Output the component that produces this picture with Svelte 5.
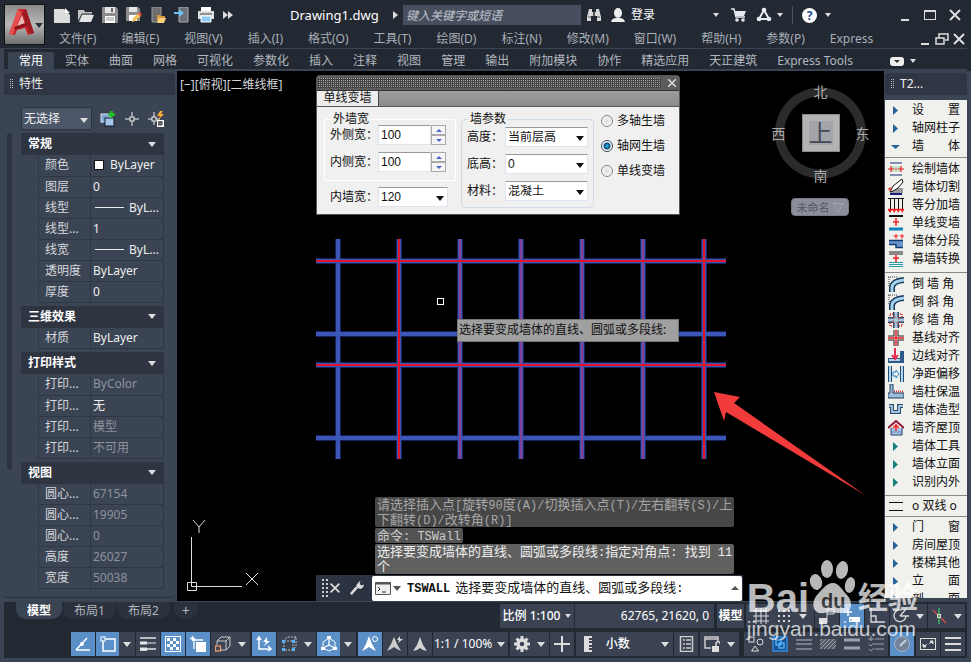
<script>
  const W = '#e4e6ea';
  const icons = {
    newFile: `<path d="M0 2h10l6 6v8H0z" fill="#dcdcdc"/><path d="M11 1l5 5h-5z" fill="#fff"/>`,
    open: `<path d="M0 15V3h6l1 2h7v3H5z" fill="#c4c4c4"/><path d="M4 8h12l-3 7H1z" fill="#e6e6e6"/><path d="M0 15L4 7h11" fill="none" stroke="#232a36"/>`,
    save: `<path d="M0 0h14l2 2v14H0z" fill="#8d8d8d"/><path d="M3 0h10v6H3z" fill="#e6e6e6"/><path d="M9 1h2v4H9z" fill="#666"/><path d="M3 9h10v7H3z" fill="#fff"/><path d="M4 11h8M4 13h8" stroke="#999"/>`,
    saveAs: `<path d="M0 0h12l2 2v12H0z" fill="#8d8d8d"/><path d="M3 0h8v5H3z" fill="#e6e6e6"/><path d="M3 8h8v6H3z" fill="#fff"/><path d="M6 15l1-4 6-5 2 3-6 5z" fill="#f4c25b"/><path d="M12 7l2-2 2 2-2 2z" fill="#e2483c"/>`,
    openWeb: `<path d="M2 0h9v15H2z" fill="#6d6d6d" stroke="#999"/><path d="M7 15V8h3l1 1h4v2z" fill="#d99b3e"/><path d="M9 11h7l-2 5H7z" fill="#f8cf7c"/>`,
    saveWeb: `<path d="M5 0h9v15H5z" fill="#6a6f78" stroke="#aaa"/><path d="M0 5h5V2l5 4-5 4V7H0z" fill="#6fc0f5"/>`,
    print: `<path d="M3 0h10v4H3z" fill="#fff"/><path d="M0 4h16v8H0z" fill="#ddd"/><path d="M2 7h12" stroke="#444"/><path d="M3 9h10v6H3z" fill="#8ecbf7" stroke="#fff"/>`,
    more: `<path d="M1 4l5 4-5 4zM6 4l5 4-5 4z" fill="#ddd"/>`,
    find: `<path d="M3 2h3v3h4V2h3l2 8v4h-4V9H5v5H1v-4z" fill="#d9d9d9"/><path d="M2 10h3M11 10h3" stroke="#555"/><path d="M7 5h2v4H7z" fill="#555"/>`,
    user: `<ellipse cx="8" cy="6" rx="4" ry="5" fill="#eee"/><path d="M1 15c1-4 4-4 7-4s6 0 7 4z" fill="#eee"/>`,
    cart: `<path d="M0 2h3l2 8h9" fill="none" stroke="#e6e9f0" stroke-width="1.500"/><path d="M4 4h11l-2 5H5z" fill="#e6e9f0"/><circle cx="6" cy="13" r="1.800" fill="#e6e9f0"/><circle cx="12" cy="13" r="1.800" fill="#e6e9f0"/>`,
    tri: `<path d="M8 3l5 9H3z" fill="none" stroke="#e6e9f0" stroke-width="2"/><circle cx="8" cy="3" r="2.300" fill="#e6e9f0"/><circle cx="3" cy="12" r="2.300" fill="#e6e9f0"/><circle cx="13" cy="12" r="2.300" fill="#e6e9f0"/>`,
    min: `<path d="M4 13h8" stroke="#ddd" stroke-width="2"/>`,
    max: `<rect x="2.500" y="3.500" width="11" height="9" fill="none" stroke="#ddd"/><path d="M2 4h12" stroke="#ddd" stroke-width="2"/>`,
    close: `<path d="M3 3l10 10M13 3L3 13" stroke="#ddd" stroke-width="2"/>`,
    restore: `<path d="M5 7V3h9v6h-3" fill="none" stroke="#ddd" stroke-width="1.500"/><path d="M2 7h8v6H2z" fill="none" stroke="#ddd" stroke-width="1.500"/>`,
    ribbon: `<rect x="1" y="4" width="14" height="9" rx="3" fill="#eee"/><path d="M5 7h6l-3 3z" fill="#333"/>`,
    pickAdd: `<rect x="1" y="3" width="9" height="8" fill="#7fa5d8" stroke="#dce8f8"/><rect x="5" y="7" width="9" height="8" fill="#a8c6ec" stroke="#0c1a30"/><path d="M11.500 0v7M8 3.500h7" stroke="#1ec322" stroke-width="2.500"/>`,
    pick: `<path d="M8 1v14M1 8h14" stroke="#eee"/><rect x="6" y="6" width="4" height="4" fill="#3b4453" stroke="#eee"/>`,
    quick: `<path d="M6 1v13M0 8h12" stroke="#eee"/><rect x="4" y="6" width="4" height="4" fill="#3b4453" stroke="#eee"/><path d="M12 0l-3 5h3l-2 4 6-6h-3l2-3z" fill="#f7a834"/><path d="M9 9h7v7H9z" fill="#fff"/><path d="M10 11h5M10 13h5M11 10v5M13 10v5" stroke="#333"/>`,
    snapA: `<path d="M1 14L12 2M1 14h14" stroke="#fff" stroke-width="1.500"/><circle cx="7" cy="8" r="2" fill="#fff"/>`,
    osnap: `<path d="M5 3h10v12H3V5" fill="none" stroke="#fff" stroke-width="1.500"/><rect x="1" y="1" width="4" height="4" fill="#5a8fc8" stroke="#fff"/>`,
    weights: `<path d="M0 2h16M0 14h7M7 13h9" stroke="${W}" stroke-width="1.500"/><path d="M0 7h7M0 13h7" stroke="${W}" stroke-width="3"/><path d="M7 7h9" stroke="${W}"/>`,
    checker: `<rect x=".5" y=".5" width="15" height="15" fill="none" stroke="#fff"/><path d="M2 2h3v3H2zM8 2h3v3H8zM5 5h3v3H5zM11 5h3v3h-3zM2 8h3v3H2zM8 8h3v3H8zM5 11h3v3H5zM11 11h3v3h-3z" fill="#fff"/>`,
    cycle: `<path d="M6 6h10v10H6z" fill="#fff"/><path d="M4 13V4h9M2.500 0v5M0 2.500h5" fill="none" stroke="#fff" stroke-width="1.300"/>`,
    cube: `<path d="M2 9V5l4-4h9v9l-4 4H6M2 5h9v9M11 5l4-4" fill="none" stroke="#ccc"/><rect x=".5" y="10" width="5" height="5" fill="#3b4453" stroke="#f09a6a" stroke-width="1.300"/>`,
    ducs: `<path d="M3 1v12h12M1 4l2-3 2 3M12 10l3 3-3 2" fill="none" stroke="#fff" stroke-width="1.500"/><path d="M11 1L7 6h3l-2 4 6-5h-3z" fill="#fff"/>`,
    filter: `<path d="M3 5l3-4h9v9l-3 4M3 5h9l3-4M12 5v9H3V5" fill="none" stroke="#bbb" stroke-dasharray="2 1"/><path d="M1 4h3v3H1zM11 4h3v3h-3zM1 12h3v3H1zM11 12h3v3h-3z" fill="#54b4f5"/>`,
    gizmo: `<path d="M8 2l6 4v6l-6 3-6-3V6z" fill="none" stroke="#fff"/><path d="M8 2v7l-6 3M8 9l6 3" fill="none" stroke="#fff" stroke-width="1.300"/><path d="M6 0h4v3H6zM0 11h4v3H0zM12 11h4v3h-4z" fill="#fff"/>`,
    annoA: `<path d="M7 0l3 8 4 7-4-2-3-2-3 2-4 2 4-7z" fill="#fff"/><circle cx="13" cy="3" r="2.500" fill="none" stroke="#fff"/>`,
    annoB: `<path d="M7 1l3 7 4 7-4-2-3-2-3 2-4 2 4-7z" fill="#ccc"/><path d="M13 0l-3 4h2l-1 3 5-4h-3z" fill="#ddd"/>`,
    annoC: `<path d="M8 1l3 8 4 6-4-1-3-2-3 2-4 1 4-6z" fill="#d4d4d4"/>`,
    gear: `<circle cx="8" cy="8" r="4" fill="none" stroke="#ddd" stroke-width="3.500"/><path d="M8 0v3M8 13v3M0 8h3M13 8h3M2.500 2.500l2 2M11.500 11.500l2 2M2.500 13.500l2-2M11.500 4.500l2-2" stroke="#ddd" stroke-width="3"/>`,
    plus: `<path d="M8 0v16M0 8h16" stroke="#ddd" stroke-width="2"/>`,
    ruler: `<path d="M4 0h8v2H9v2h3v1H9v2h3v2H9v2h3v1H9v2h3v2H4z" fill="#ddd"/>`,
    props: `<rect x="2.500" y=".5" width="12" height="15" fill="none" stroke="#ccc" stroke-width="1.500"/><path d="M5 4h2M8 4h5M5 8h2M8 8h5M5 12h2M8 12h5" stroke="#ccc" stroke-width="1.500"/>`,
    lock: `<path d="M7 12H1V1h13v5M1 3h13" fill="none" stroke="#ccc" stroke-width="1.500"/><path d="M8 10h7v6H8z" fill="#ddd"/><path d="M12 10V7q2-3 4 0v1" fill="none" stroke="#ddd" stroke-width="1.500"/>`,
    shapes: `<rect x="1" y="1" width="5" height="5" fill="none" stroke="#ddd"/><circle cx="12" cy="6" r="3" fill="none" stroke="#ddd"/><path d="M7 10l3.500 5h-7z" fill="none" stroke="#ddd"/>`,
    isolate: `<rect x="1" y="1" width="14" height="14" fill="#1c4f86" stroke="#2a8be6" stroke-width="1.500"/><rect x="4" y="4" width="5" height="5" fill="none" stroke="#4db0ff" stroke-width="1.500"/><rect x="7" y="7" width="5" height="5" fill="none" stroke="#4db0ff" stroke-width="1.500"/>`,
    lines3: `<path d="M0 4h16M0 8h16M0 13h16" stroke="#8d939d" stroke-width="1.500"/>`,
    hatch: `<rect y="3" width="16" height="10" fill="#555d69"/><path d="M0 5l2-2M0 9l6-6M0 13L10 3M4 13L14 3M8 13l8-8M12 13l4-4" stroke="#9a9fa8"/>`,
    lines2: `<path d="M0 4h16M0 12h16" stroke="#9ba1ab" stroke-width="3"/>`,
    listAdd: `<path d="M3 0v5M0 3h6M7 3h9M6 8h10M7 13h9M1 8l2 2 3-3M1 13l2 2 3-3" fill="none" stroke="#9ba1ab"/>`,
    perf: `<circle cx="8" cy="8" r="7.500" fill="#71829a" stroke="#a9b5c6"/><path d="M6 10l6-6" stroke="#c8d0dc" stroke-width="2"/>`,
    full: `<rect x=".5" y="2.500" width="15" height="11" fill="none" stroke="#ddd"/><path d="M10 5h3v3zM3 8v3h3z" fill="#ddd" stroke="#ddd"/><path d="M12 5L9 8M4 11l3-3" stroke="#ddd"/>`,
    burger: `<path d="M0 2h16M0 8h16M0 14h16" stroke="#ddd" stroke-width="2"/>`,
    grid: `<path d="M3 0v16M8 0v16M13 0v16M0 3h16M0 8h16M0 13h16" stroke="#ddd"/>`,
    dots: `<path d="M2 3h2M7 3h2M12 3h2M2 8h2M7 8h2M12 8h2M2 13h2M7 13h2M12 13h2" stroke="#ddd" stroke-width="2"/>`,
    infer: `<path d="M0 10h8v6H0z" fill="#ddd"/><path d="M8 15V1h7v5H8" fill="none" stroke="#ddd"/>`,
    dyn: `<path d="M4 1v7M0 4h8" stroke="#fff" stroke-width="1.500"/><path d="M5 9h11v5H5z" fill="#fff"/><path d="M7 11v2" stroke="#5a8fc8"/>`,
    ortho: `<path d="M2 0v14h14M2 8h5v6" fill="none" stroke="#ddd" stroke-width="1.300"/>`,
    polar: `<path d="M13 8a6 6 0 1 1-4-6M7 8h9M7 8l6-7" fill="none" stroke="#ddd" stroke-width="1.300"/>`,
    iso: `<path d="M2 2l13 13" stroke="#d34b4b" stroke-width="1.500"/><path d="M8 0v16" stroke="#3fae69" stroke-width="1.500"/><rect x="6.500" y="6.500" width="3" height="3" fill="none" stroke="#ddd"/>`,
    wrench: `<path d="M1 15l7-8" stroke="#ddd" stroke-width="3"/><path d="M9 8L7 5l3-4 2-1-1 3 2 2 3-1-1 3-3 2z" fill="#ddd"/>`,
    arrowR: `<path d="M5 4l5 4.500-5 4.500z" fill="#26639b"/>`,
    arrowT: `<path d="M5 4l5 4.500-5 4.500z" fill="#158080"/>`,
    arrowD: `<path d="M3 7h9l-4.500 4z" fill="#26639b"/>`,
    wDraw: `<path d="M2 2h12M2 14h12" stroke="#1c2f78"/><path d="M2 5h12v6H2z" fill="#c7e4c8"/><path d="M0 8h6M10 8h6M7 8h2M3 5v6M13 5v6" stroke="#e22" stroke-width="1.200"/>`,
    wCut: `<path d="M5 9h10v5H2z" fill="#9a9a9a"/><path d="M2 15h12" stroke="#17207c" stroke-width="2"/><path d="M2 13l3-6 9-7 1 3-5 6-5 3z" fill="#fff" stroke="#111"/><path d="M0 10h4M2 8v4" stroke="#d22"/>`,
    wDiv: `<path d="M0 1.500h16M2.500 1v11M6.500 1v11M10.500 1v11M14.500 1v11" stroke="#111"/><path d="M0 12.500h16" stroke="#e22" stroke-width="1.500"/><path d="M0 13h4l-2 3zM5 13h3l-2 3zM9 13h3l-2 3zM13 13h3l-2 3z" fill="#e22"/>`,
    wLine: `<path d="M1 1h14" stroke="#111" stroke-width="2"/><path d="M1 14h14" stroke="#0d83b8" stroke-width="3"/><path d="M8 3v8M5 7h6" stroke="#e22" stroke-width="1.500"/>`,
    wSeg: `<path d="M1 7h14v8H8v-4H1z" fill="#6c97cc"/><path d="M1 7.500h14M1 11.500h7v3h7" fill="none" stroke="#173d73" stroke-width="1.500"/><path d="M8 1v5M5.500 3h5M14 1v5M12 3h4" stroke="#e22"/>`,
    wConv: `<path d="M1 1h14M1 3h14" stroke="#222"/><path d="M1 11.500h14M1 13.500h14M1 15.500h14" stroke="#2a9aa5"/><path d="M8 4v7M5 7h6" stroke="#e22" stroke-width="1.500"/>`,
    cornerR: `<path d="M4 16V11Q5 5 16 4" fill="none" stroke="#17385e" stroke-width="6"/><path d="M4 16V11Q5 5 16 4" fill="none" stroke="#a7d3ea" stroke-width="3"/><path d="M0 1h9M1 1v9" stroke="#333" stroke-dasharray="1 1"/>`,
    fix: `<path d="M2 2h12v12H2z" fill="none" stroke="#e0583a" stroke-width="2" stroke-dasharray="1 1"/><path d="M8 0v16M0 8h16" stroke="#314a69" stroke-width="6"/><path d="M8 0v16M0 8h16" stroke="#a9c4dd" stroke-width="3"/><path d="M5 5h6v6H5z" fill="none" stroke="#e0583a" stroke-dasharray="1 1"/>`,
    base: `<path d="M8 0v16M0 8h16" stroke="#222" stroke-width="5"/><path d="M8 0v16M0 8h16" stroke="#e8edf2" stroke-width="3"/><path d="M8 0v16M0 8h16" stroke="#e22" stroke-width="1.500"/>`,
    edge: `<path d="M0 10h12V3h4v12H0z" fill="#2c5a88"/><path d="M1 12h11" stroke="#b7d3ea" stroke-width="2"/><path d="M7 0v9M4 7l3 4 3-4" fill="none" stroke="#ee2b55" stroke-width="2"/>`,
    dist: `<path d="M2 0v16M14 0v16" stroke="#1f4b77" stroke-width="4"/><path d="M2 0v16M14 0v16" stroke="#b5d7ee" stroke-width="2"/><path d="M5 6h3V4l3 4-3 4v-2H5z" fill="none" stroke="#2b86c9"/>`,
    insul: `<path d="M2 0h3v9h11v5H0V9h2z" fill="#9bbbd6" stroke="#1f3e63"/><path d="M6 7.500h10" stroke="#c33" stroke-width="2" stroke-dasharray="1 1"/>`,
    shape: `<path d="M1 4h3v6h7V4h4" fill="none" stroke="#27517d" stroke-width="4"/><path d="M1 4h3v6h7V4h4" fill="none" stroke="#cfe0ef" stroke-width="1.500"/>`,
    roof: `<path d="M3 8v7h11V8" fill="#a9c4e6" stroke="#20406f"/><path d="M0 8l8-7 8 7" fill="none" stroke="#8e1636" stroke-width="2"/><path d="M8 4v7M5 8l3-3 3 3" fill="none" stroke="#e22" stroke-width="1.500"/><path d="M4 12h9" stroke="#6484b5"/>`,
    dbl: `<path d="M1 4.500h14M1 12.500h14" stroke="#111"/>`
  };

  const quick = ['newFile', 'open', 'save', 'saveAs', 'openWeb', 'saveWeb', 'print', 'more'];
  const menus = ['文件(F)', '编辑(E)', '视图(V)', '插入(I)', '格式(O)', '工具(T)', '绘图(D)', '标注(N)', '修改(M)', '窗口(W)', '帮助(H)', '参数(P)', 'Express'];
  const tabs = ['常用', '实体', '曲面', '网格', '可视化', '参数化', '插入', '注释', '视图', '管理', '输出', '附加模块', '协作', '精选应用', '天正建筑', 'Express Tools'];

  const groups = [
    { title: '常规', rows: [['颜色', 'ByLayer', 'box'], ['图层', '0'], ['线型', 'ByL...', 'line'], ['线型...', '1'], ['线宽', 'ByL...', 'line'], ['透明度', 'ByLayer'], ['厚度', '0']] },
    { title: '三维效果', rows: [['材质', 'ByLayer']] },
    { title: '打印样式', rows: [['打印...', 'ByColor', 'dim'], ['打印...', '无'], ['打印...', '模型', 'dim'], ['打印...', '不可用', 'dim']] },
    { title: '视图', rows: [['圆心...', '67154', 'dim'], ['圆心...', '19905', 'dim'], ['圆心...', '0', 'dim'], ['高度', '26027', 'dim'], ['宽度', '50038', 'dim']] }
  ];

  const tools = [
    [['arrowR', '设　　置'], ['arrowR', '轴网柱子'], ['arrowD', '墙　　体']],
    [['wDraw', '绘制墙体'], ['wCut', '墙体切割'], ['wDiv', '等分加墙'], ['wLine', '单线变墙'], ['wSeg', '墙体分段'], ['wConv', '幕墙转换']],
    [['cornerR', '倒 墙 角'], ['cornerR', '倒 斜 角'], ['fix', '修 墙 角'], ['base', '基线对齐'], ['edge', '边线对齐'], ['dist', '净距偏移'], ['insul', '墙柱保温'], ['shape', '墙体造型'], ['roof', '墙齐屋顶'], ['arrowT', '墙体工具'], ['arrowT', '墙体立面'], ['arrowT', '识别内外']],
    [['dbl', 'o 双线 o']],
    [['arrowR', '门　　窗'], ['arrowR', '房间屋顶'], ['arrowR', '楼梯其他'], ['arrowR', '立　　面'], ['arrowR', '剖　　面']]
  ];

  const history = [
    { tone: 'old', lines: ['请选择插入点[旋转90度(A)/切换插入点(T)/左右翻转(S)/上', '下翻转(D)/改转角(R)]'] },
    { tone: 'mid', lines: ['命令: TSWall'] },
    { tone: 'new', lines: ['选择要变成墙体的直线、圆弧或多段线:指定对角点: 找到 11', '个'] }
  ];
  const runs = (s) => s.match(/[\x20-\x7e]+|[^\x20-\x7e]+/g) ?? [];

  const status = [
    [{ i: 'snapA', on: true }, { i: 'osnap', on: true, split: true }, { i: 'weights' }, { i: 'checker', on: true }, { i: 'cycle', on: true }, { i: 'cube', caret: true }],
    [{ i: 'ducs', on: true }, { i: 'filter', caret: true }, { i: 'gizmo', on: true, split: true }],
    [{ i: 'annoA', on: true }, { i: 'annoB' }, { i: 'annoC' }, { t: '1:1 / 100%', caret: true }],
    [{ i: 'gear', caret: true }, { i: 'plus' }],
    [{ i: 'ruler', t: '小数', caret: true, wide: true }, { i: 'props' }],
    [{ i: 'lock', caret: true }],
    [{ i: 'shapes' }, { i: 'isolate' }, { i: 'lines3' }, { i: 'hatch' }, { i: 'lines2' }, { i: 'listAdd' }],
    [{ i: 'perf', on: true }],
    [{ i: 'full' }, { i: 'burger' }]
  ];

  const columns = [22, 83, 144, 205, 266, 327, 388];
  const redColumns = [83, 388];
  const softColumns = [144, 205, 266, 327];
  const beams = [25, 98, 129, 202];
  const redBeams = [25, 129];

  let outer = $state('100');
  let inner = $state('100');
  let mode = $state('轴网生墙');
</script>

{#snippet icon(name, size = 16)}
  <span class="icon">{@html `<svg width="${size}" height="${size}" viewBox="0 0 16 16">${icons[name]}</svg>`}</span>
{/snippet}

<div class="app">
  <header>
    <button class="logo" aria-label="应用程序菜单">
      <svg width="38" height="38" viewBox="0 0 38 38">
        <path d="M4 28L13 3h8l8 24-6 2-3-7-8 2-2 5z" fill="#c9252c" />
        <path d="M13 3l4 4-9 21-4 0z" fill="#e8514f" />
        <path d="M17 9l3 9-8 2z" fill="#e9b8b6" />
        <path d="M9 21l14-5 1 3-14 5z" fill="#8e151b" />
        <path d="M21 3l8 24-4 1L17 7z" fill="#9c1b22" />
        <path d="M30 17h8l-4 5z" fill="#2a3342" />
      </svg>
    </button>
    <div class="bars">
      <div class="titlebar">
        <div class="quick">
          {#each quick as q}<button aria-label={q}>{@render icon(q)}</button>{/each}
        </div>
        <span class="title">Drawing1.dwg</span>
        <span class="tri-right"></span>
        <input class="search" type="text" placeholder="键入关键字或短语" aria-label="搜索" />
        <button class="find" aria-label="查找">{@render icon('find')}</button>
        <button class="login">{@render icon('user')}登录</button>
        <div class="account">
          <span class="caret small"></span>
          <button aria-label="商店">{@render icon('cart')}</button>
          <button aria-label="应用">{@render icon('tri')}<span class="caret small"></span></button>
          <span class="rule"></span>
          <button aria-label="帮助"><span class="help">?</span><span class="caret small"></span></button>
        </div>
        <div class="window">
          <button aria-label="最小化">{@render icon('min')}</button>
          <button aria-label="最大化">{@render icon('max')}</button>
          <button aria-label="关闭">{@render icon('close')}</button>
        </div>
      </div>
      <nav class="menubar">
        {#each menus as m}<button>{m}</button>{/each}
        <div class="docwin">
          <button aria-label="最小化图形">{@render icon('min')}</button>
          <button aria-label="还原图形">{@render icon('restore')}</button>
          <button aria-label="关闭图形">{@render icon('close')}</button>
        </div>
      </nav>
    </div>
  </header>

  <nav class="ribbon">
    {#each tabs as t, n}<button class:active={n === 0}>{t}</button>{/each}
    <button class="fold" aria-label="功能区选项">{@render icon('ribbon')}<span class="caret small"></span></button>
  </nav>

  <main>
    <aside class="props">
      <div class="panel-head"><span class="grip"></span>特性</div>
      <div class="props-body">
        <div class="picker">
          <div class="combo dark">
            <select aria-label="选择对象"><option>无选择</option></select>
            <span class="caret"></span>
          </div>
          <button aria-label="切换累加选择">{@render icon('pickAdd')}</button>
          <button aria-label="选择对象">{@render icon('pick')}</button>
          <button aria-label="快速选择">{@render icon('quick')}</button>
        </div>
        <div class="scroller">
          <span class="thumb"></span>
          <div class="groups">
            {#each groups as g}
              <section>
                <button class="group-head">{g.title}<span class="caret"></span></button>
                <table>
                  <tbody>
                    {#each g.rows as [label, value, kind]}
                      <tr>
                        <th scope="row">{label}</th>
                        <td class:dim={kind === 'dim'}>
                          {#if kind === 'box'}<span class="swatch"></span>{:else if kind === 'line'}<span class="stroke"></span>{/if}{value}
                        </td>
                      </tr>
                    {/each}
                  </tbody>
                </table>
              </section>
            {/each}
          </div>
        </div>
      </div>
    </aside>

    <div class="canvas">
      <span class="view-label">[−][俯视][二维线框]</span>

      <svg class="plan" width="412" height="224" viewBox="0 0 412 224">
        <g stroke="#18225a" stroke-width="6">
          {#each columns as x}<path d="M{x} 3V223" />{/each}
          {#each beams as y}<path d="M0 {y}H410" />{/each}
        </g>
        <g stroke="#3a55b4" stroke-width="4">
          {#each columns as x}<path d="M{x} 3V223" />{/each}
          {#each beams as y}<path d="M0 {y}H410" />{/each}
        </g>
        <g stroke="#8a3f94" stroke-width="2">
          {#each softColumns as x}<path d="M{x} 3V223" />{/each}
        </g>
        <g stroke="#e0142c" stroke-width="2">
          {#each redColumns as x}<path d="M{x} 3V223" />{/each}
          {#each redBeams as y}<path d="M0 {y}H410" />{/each}
        </g>
      </svg>
      <svg class="pickbox" width="8" height="8"><rect x="1.500" y="1.500" width="6" height="6" fill="none" stroke="#fff" /></svg>
      <div class="tooltip">选择要变成墙体的直线、圆弧或多段线:</div>
      <svg class="pointer" width="152" height="104" viewBox="0 0 152 104"><path d="M0 0l26 5-6 6 131 92L12 20l-2 9z" fill="#f23b3b" /></svg>
      <svg class="ucs" width="76" height="76" viewBox="0 0 76 76">
        <path d="M6 1l6 7 6-7M12 8v6M4.500 18v45M9 67.500h46M59 54l12 12M71 54L59 66" fill="none" stroke="#ddd" />
        <path d="M.5 63.500h9v8h-9zM4.500 62v5.500H10" fill="none" stroke="#ddd" />
      </svg>

      <div class="cube">
        <span class="north">北</span>
        <span class="west">西</span>
        <span class="top">上</span>
        <span class="east">东</span>
        <span class="south">南</span>
      </div>
      <button class="ucs-name">未命名<span>▽</span></button>

      <div class="dialog" role="dialog" aria-label="单线变墙">
        <div class="dlg-title"><span class="mesh"></span><button aria-label="关闭">{@render icon('close', 12)}</button></div>
        <div class="dlg-tabs"><button>单线变墙</button></div>
        <div class="dlg-body">
          <div>
            <fieldset class="outer">
              <legend>外墙宽</legend>
              <div class="field"><label for="outer">外侧宽：</label><input id="outer" type="text" bind:value={outer} /><span class="spin"><button aria-label="增加外侧宽"></button><button aria-label="减少外侧宽"></button></span></div>
              <div class="field"><label for="inner">内侧宽：</label><input id="inner" type="text" bind:value={inner} /><span class="spin"><button aria-label="增加内侧宽"></button><button aria-label="减少内侧宽"></button></span></div>
            </fieldset>
            <div class="field single"><label for="in">内墙宽：</label><div class="combo"><select id="in"><option>120</option></select><span class="caret"></span></div></div>
          </div>
          <fieldset class="params">
            <legend>墙参数</legend>
            <div class="field"><label for="h">高度：</label><div class="combo"><select id="h"><option>当前层高</option></select><span class="caret"></span></div></div>
            <div class="field"><label for="b">底高：</label><div class="combo"><select id="b"><option>0</option></select><span class="caret"></span></div></div>
            <div class="field"><label for="m">材料：</label><div class="combo"><select id="m"><option>混凝土</option></select><span class="caret"></span></div></div>
          </fieldset>
          <div class="radios">
            {#each ['多轴生墙', '轴网生墙', '单线变墙'] as r}
              <label><input type="radio" name="mode" value={r} bind:group={mode} />{r}</label>
            {/each}
          </div>
        </div>
      </div>

      <div class="command">
        <div class="history">
          {#each history as h}
            <div class={h.tone}>
              {#each h.lines as line}
                <div class="line">{#each runs(line) as r}<span class:mono={/[\x20-\x7e]/.test(r)}>{r}</span>{/each}</div>
              {/each}
            </div>
          {/each}
        </div>
        <div class="cmdbar">
          <span class="grip big"></span>
          <button aria-label="关闭命令行">{@render icon('close', 14)}</button>
          <button aria-label="自定义">{@render icon('wrench', 14)}</button>
          <div class="prompt">
            <svg width="16" height="13" viewBox="0 0 16 13"><path d="M.5.5h15v12H.5z" fill="#eee" stroke="#555" /><path d="M0 1.500h16" stroke="#555" stroke-width="2" /><path d="M3 5l2 2-2 2M7 10h4" fill="none" stroke="#333" /></svg>
            <span class="caret"></span>
            <label for="cmd"><b class="mono">TSWALL</b><span>选择要变成墙体的直线、圆弧或多段线</span><span class="mono">:</span></label>
            <input id="cmd" type="text" />
            <span class="caret up"></span>
          </div>
        </div>
      </div>
    </div>

    <aside class="tools">
      <div class="panel-head"><span class="grip"></span>T2...</div>
      <div class="tool-list">
        {#each tools as set}
          <div class="set">
            {#each set as [i, t]}<button>{@render icon(i)}<span>{t}</span></button>{/each}
          </div>
        {/each}
      </div>
    </aside>
  </main>

  <footer>
    <div class="layouts">
      <div class="sheets">
        <button class="current">模型</button>
        <button>布局1</button>
        <button>布局2</button>
        <button>+</button>
      </div>
      <div class="cells">
        <button class="scale">比例 1:100<span class="caret small"></span></button>
        <span class="coords">62765, 21620, 0</span>
        <button class="model">模型</button>
        <div class="seg">
          <button aria-label="栅格">{@render icon('grid')}</button>
          <button class="pair" aria-label="捕捉">{@render icon('dots')}<span class="caret"></span></button>
        </div>
        <button aria-label="推断约束">{@render icon('infer')}</button>
        <button class="on" aria-label="动态输入">{@render icon('dyn')}</button>
        <button aria-label="正交">{@render icon('ortho')}</button>
        <button class="pair" aria-label="极轴追踪">{@render icon('polar')}<span class="caret"></span></button>
        <button class="pair" aria-label="等轴测草图">{@render icon('iso')}<span class="caret"></span></button>
      </div>
    </div>
    <div class="status">
      {#each status as g}
        <div class="cluster">
          {#each g as s}
            <button class:on={s.on && !s.split} class:pair={s.caret && s.i && !s.wide} class:ratio={!s.i} class:split={s.split} class:wide={s.wide} aria-label={s.t ?? s.i}>
              {#if s.i}<span class="face">{@render icon(s.i)}</span>{/if}
              {#if s.t}<span class="txt">{s.t}</span>{/if}
              {#if s.caret || s.split}<span class="caret"></span>{/if}
            </button>
          {/each}
        </div>
      {/each}
    </div>
  </footer>

  <div class="watermark">
    <div class="brand">
      <span>Bai</span>
      <svg width="46" height="58" viewBox="0 0 46 58">
        <g fill="#fff">
          <ellipse cx="7" cy="24" rx="6" ry="8" transform="rotate(-15 7 24)" />
          <ellipse cx="18" cy="11" rx="6" ry="9" />
          <ellipse cx="33" cy="12" rx="6" ry="9" transform="rotate(12 33 12)" />
          <ellipse cx="41" cy="27" rx="5" ry="8" transform="rotate(12 41 27)" />
          <path d="M24 25c6 0 9 7 14 12 6 6 6 18-5 18-5 0-14-1-18 0-12 2-13-11-7-18 5-5 9-12 16-12z" />
        </g>
        <text x="12" y="50" font-family="Liberation Sans, sans-serif" font-size="20" font-weight="bold" fill="#444">du</text>
      </svg>
      <span class="exp">经验</span>
    </div>
    <div class="site">jingyan.baidu.com</div>
  </div>
</div>

<style>
  :global(body) { background: #222933; }
  .app {
    position: relative;
    display: flex;
    flex-direction: column;
    min-height: 100vh;
    box-sizing: border-box;
    overflow: hidden;
    background: #222933;
    color: #d4d7dc;
    font: 12px/16px "Noto Sans", "Noto Sans CJK SC", sans-serif;
  }
  .app * { box-sizing: border-box; }
  button { padding: 0; border: 0; background: none; color: inherit; font: inherit; white-space: nowrap; }
  input, select { font: inherit; color: inherit; }
  .icon { display: flex; flex: none; }
  .caret {
    flex: none;
    width: 0;
    height: 0;
    border: 4px solid transparent;
    border-top: 5px solid #ddd;
    border-bottom: 0;
  }
  .caret.small { border-width: 4px 3px 0; }
  .caret.up { border-top: 0; border-bottom: 4px solid #555; }

  header { display: flex; height: 48px; padding-left: 4px; }
  .logo { width: 41px; height: 41px; margin-top: 4px; border: 1px solid #111; background: linear-gradient(#8b8b8b, #b9b9b9 50%, #6e6e6e); }
  .logo svg { display: block; }
  .bars { flex: 1; min-width: 0; }
  .titlebar { display: flex; align-items: center; height: 30px; padding-left: 9px; color: #fff; }
  .quick { display: flex; gap: 8px; }
  .title { margin-left: 52px; width: 103px; font-size: 13px; }
  .tri-right { border: 4px solid transparent; border-left: 5px solid #ddd; border-right: 0; }
  .search { width: 178px; height: 20px; margin-left: 5px; padding: 0 3px; border: 0; background: #474f5f; }
  .search::placeholder { color: #c3c7ce; font-style: italic; opacity: 1; }
  .find { margin: 0 8px 0 5px; }
  .login { display: flex; align-items: center; gap: 5px; }
  .account { display: flex; align-items: center; gap: 9px; margin-left: auto; }
  .account > .caret { margin-right: 3px; }
  .account button { display: flex; align-items: center; gap: 5px; }
  .rule { width: 1px; height: 18px; background: #4a5468; }
  .help { width: 15px; height: 15px; border-radius: 50%; background: #fff; color: #1d4e9b; font-weight: bold; line-height: 15px; }
  .account button .help + .caret { margin-left: 3px; }
  .window { display: flex; gap: 9px; padding: 0 8px 0 66px; }
  .menubar { display: flex; align-items: center; gap: 25px; height: 18px; padding-left: 14px; color: #a9aeb6; }
  .docwin { display: flex; gap: 1px; margin-left: auto; padding-right: 4px; }

  .ribbon { display: flex; height: 23px; margin: 0 4px 0 0; padding: 3px 0 0 4px; border: solid #3b4453; border-width: 1px 0 2px 4px; color: #b2b7bf; }
  .ribbon button { padding: 0 10px; }
  .ribbon .active { width: 46px; margin-right: 1px; background: #3b4453; color: #fff; border-radius: 2px 2px 0 0; }
  .ribbon .fold { display: flex; align-items: center; gap: 5px; margin-left: 16px; }

  main { display: flex; flex: 1; background: #3b4453; }
  .props { display: flex; flex-direction: column; width: 177px; padding: 2px 2px 3px 4px; }
  .panel-head { display: flex; align-items: center; gap: 6px; height: 22px; padding-left: 5px; border-radius: 4px 4px 0 0; background: #2f3542; color: #eee; }
  .grip { width: 4px; height: 10px; background: conic-gradient(#b8bcc4 25%, transparent 0) 0 0 / 2px 2px; }
  .props-body { flex: 1; padding-top: 12px; border-bottom: 1px solid #2a303b; border-radius: 0 0 4px 4px; }
  .picker { display: flex; align-items: center; gap: 8px; padding-left: 17px; }
  .combo { position: relative; flex: 1; }
  .combo select { width: 100%; height: 20px; padding: 0 2px; border: 1px solid #e0e3ee; border-top-color: #999; background: #fff; appearance: none; border-radius: 0; display: block; }
  .combo .caret { position: absolute; right: 4px; top: 9px; border-top-color: #111; pointer-events: none; }
  .combo.dark { flex: none; width: 71px; }
  .combo.dark select { height: 23px; border: 1px solid #2b323e; background: #4c5669; color: #eee; border-radius: 2px; }
  .combo.dark .caret { top: 11px; border-top-color: #ddd; }
  .scroller { display: flex; gap: 9px; padding: 3px 0 0 3px; }
  .thumb { width: 5px; height: 337px; border-radius: 3px; background: #2d3440; }
  .groups { width: 143px; display: flex; flex-direction: column; gap: 3px; }
  .group-head { display: flex; align-items: center; justify-content: space-between; width: 100%; height: 22px; padding: 0 8px 0 7px; background: #2e3440; color: #fff; font-weight: bold; }
  table { width: 126px; margin-left: 17px; border-collapse: collapse; table-layout: fixed; border-left: 1px solid #2f3744; }
  tr { height: 21px; }
  th, td { height: 21px; padding: 0; border-bottom: 1px solid #2f3744; border-right: 1px solid #2f3744; line-height: 16px; white-space: nowrap; overflow: hidden; text-align: left; }
  th { width: 52px; padding-left: 6px; font-weight: normal; color: #d4d7dc; }
  td { padding-left: 2px; color: #eee; }
  td.dim { color: #8d939d; }
  .swatch { display: inline-block; width: 10px; height: 10px; margin: 0 6px 0 1px; border: 1px solid #111; background: #fff; vertical-align: -1px; }
  .stroke { display: inline-block; width: 29px; height: 1px; margin: 0 5px 0 2px; background: #eee; vertical-align: 4px; }

  .canvas { position: relative; flex: 1; min-width: 0; overflow: hidden; background: #000; }
  .canvas > svg { position: absolute; }
  .view-label { position: absolute; left: 3px; top: 6px; }
  .canvas > .plan { left: 139px; top: 165px; }
  .canvas > .pickbox { left: 259px; top: 226px; }
  .tooltip { position: absolute; left: 280px; top: 248px; height: 23px; padding: 0 12px 0 1px; background: #a0a0a0; border: 1px solid #777; color: #111; line-height: 19px; white-space: nowrap; }
  .canvas > .pointer { left: 537px; top: 321px; }
  .canvas > .ucs { left: 10px; bottom: 6px; }

  .cube {
    position: absolute;
    right: 11px;
    top: 10px;
    display: grid;
    grid-template-columns: 21px 63px 21px;
    grid-template-rows: 20px 64px 20px;
    place-items: center;
    color: #aaa;
    font: 14px/20px "Noto Sans CJK SC", sans-serif;
    background: radial-gradient(circle at 50% 50%, transparent 36px, #2b2b2b 37px 45px, transparent 46px);
  }
  .north, .south { grid-column: 2; }
  .west { grid-column: 1; }
  .top { width: 38px; height: 38px; border: 1px solid #888; background: linear-gradient(#a2a4aa, #a2a4aa) 50% 50% / 24px 24px no-repeat #b3b3b3; color: #454a55; font-size: 24px; line-height: 34px; text-align: center; }
  .ucs-name { position: absolute; right: 35px; top: 127px; width: 58px; height: 18px; border: 1px solid #777986; border-radius: 4px; background: #8c8e9b; color: #555762; font: 11px/14px "Noto Sans CJK SC", sans-serif; }
  .ucs-name span { margin-left: 3px; color: #bbb; }

  .dialog { position: absolute; left: 139px; top: 4px; width: 364px; border: 1px solid #555; border-radius: 4px 4px 0 0; background: #f0f0f0; color: #111; font-family: "Liberation Sans", "Noto Sans CJK SC", sans-serif; line-height: 12px; overflow: hidden; }
  .dlg-title { display: flex; align-items: center; gap: 5px; height: 14px; padding: 0 1px; background: #5c5c5c; }
  .mesh { flex: 1; height: 10px; background: conic-gradient(#a4a4a4 25%, #444 0) 0 0 / 2px 2px; }
  .dlg-tabs { height: 17px; border-bottom: 1px solid #555; border-top: 1px solid #333; background: linear-gradient(#9d9d9d, #8b8b8b); }
  .dlg-tabs button { width: 62px; height: 15px; line-height: 15px; background: #ededed; border-right: 1px solid #444; }
  .dlg-body { display: flex; gap: 5px; padding: 6px 7px 6px; }
  fieldset { min-width: 0; margin: 0; padding: 0 9px 8px 5px; border: 1px solid #fff; border-radius: 2px; }
  legend { padding: 0 2px; margin-left: 1px; line-height: 12px; }
  .outer { width: 132px; }
  .params { width: 133px; padding: 2px 5px 6px; border-color: #cfdbe6; border-radius: 4px; }
  .field { display: flex; align-items: center; }
  .field + .field { margin-top: 7px; }
  .field label { width: 48px; white-space: nowrap; }
  .params label { width: 38px; }
  .field input { width: 53px; height: 20px; padding: 0 2px; border: 1px solid #e0e3ee; border-top-color: #999; background: #fff; }
  .spin { display: flex; flex-direction: column; }
  .spin button { display: flex; align-items: center; justify-content: center; width: 15px; height: 10px; border: 1px solid #aaa; background: #f5f5f5; }
  .spin button::after { content: ""; border: 3px solid transparent; border-top: 0; border-bottom: 3px solid #4a66c4; }
  .spin button + button::after { border-bottom: 0; border-top: 3px solid #4a66c4; }
  .single { padding: 6px 8px 0 6px; }
  .radios { display: flex; flex-direction: column; gap: 9px; padding-left: 2px; }
  .radios label { display: flex; align-items: center; gap: 4px; height: 16px; }
  .radios input { width: 12px; height: 12px; margin: 0; appearance: none; border: 1px solid #888; border-radius: 50%; background: radial-gradient(#ddd, #fff); }
  .radios input:checked { background: radial-gradient(#1fa3d8 1px, #0d3d66 3px, #fff 4px); border-color: #345; }

  .command { position: absolute; left: 139px; bottom: 0; width: 427px; font-size: 13px; }
  .history { display: flex; flex-direction: column; align-items: flex-start; gap: 1px; margin: 0 0 1px 59px; line-height: 15px; }
  .history > div { padding: 0 2px; border-radius: 2px; }
  .line { display: flex; align-items: baseline; height: 15px; white-space: pre; }
  .mono { font-family: "Liberation Mono", monospace; font-size: 12px; }
  .old { background: #474747; color: #a6a6a6; }
  .mid { background: #535353; color: #ccc; }
  .new { background: #606060; color: #eee; }
  .cmdbar { display: flex; align-items: center; gap: 8px; height: 26px; padding-left: 4px; background: #2c3340; }
  .grip.big { width: 8px; height: 18px; margin-right: -8px; background: conic-gradient(#ccc 25%, transparent 0) 0 0 / 4px 4px; }
  .prompt { flex: 1; display: flex; align-items: center; gap: 2px; height: 25px; padding: 0 3px; background: #fff; border-radius: 2px; color: #111; margin-right: 1px; }
  .prompt .caret { border-top-color: #555; }
  .prompt label { display: flex; align-items: baseline; margin-left: 4px; white-space: nowrap; }
  .prompt b { margin-right: 5px; }
  .prompt input { flex: 1; min-width: 0; width: 10px; border: 0; background: none; outline: 0; }

  .tools { display: flex; flex-direction: column; width: 87px; padding: 2px 4px 3px 1px; }
  .tools .panel-head { flex: none; }
  .tool-list { flex: 1 1 0; min-height: 0; overflow: hidden; margin-top: 5px; background: #f0f0ec; color: #111; }
  .set { padding: 1px 0 2px; border-bottom: 1px solid #8a8a8a; }
  .set:nth-child(n + 2) { padding: 2px 0 4px; }
  .set:nth-child(4), .set:nth-child(5) { padding: 1px 0; }
  .set button { display: flex; align-items: center; gap: 8px; height: 18px; padding-left: 3px; white-space: pre; }

  footer { border: solid #3b4453; border-width: 1px 4px 4px; }
  .layouts, .status { display: flex; }
  .layouts { justify-content: space-between; height: 30px; }
  .sheets { display: flex; padding-left: 12px; gap: 1px; color: #b0b5bd; }
  .sheets button { height: 17px; padding: 0 11px; border-radius: 0 0 10px 10px; background: #2b323e; }
  .sheets .current { background: #3b4453; color: #fff; font-weight: bold; }
  .sheets button:last-child { width: 24px; padding: 0; margin-left: 3px; font-size: 14px; line-height: 15px; }
  .cells { display: flex; gap: 1px; padding: 2px 2px 3px 0; color: #fff; }
  .cells > *, .cluster button { display: flex; align-items: center; justify-content: center; min-width: 24px; height: 24px; background: #3b4353; }
  .cells .scale { width: 74px; gap: 5px; font-weight: 500; }
  .cells .coords { width: 139px; padding-right: 5px; justify-content: flex-end; }
  .cells .model { width: 27px; margin: 0 1px 0 2px; font-weight: bold; }
  .cells .seg { gap: 7px; width: 68px; }
  .cells .pair { gap: 7px; }
  .seg .pair { display: flex; align-items: center; }
  .cells > .pair { width: 37px; }
  .cells > .on, .cluster .on { background: #5a8fc8; }
  .status { gap: 2px; height: 26px; padding: 0 2px 2px 67px; color: #fff; }
  .cluster { display: flex; gap: 1px; }
  .cluster:nth-child(7) { margin-left: auto; gap: 0; }
  .cluster .pair { gap: 7px; padding: 0 4px; }
  .cluster .ratio { gap: 5px; padding: 0 3px 0 1px; }
  .cluster .wide { width: 97px; justify-content: space-between; padding: 0 4px; font-weight: 500; }
  .wide .txt { margin-right: 22px; }
  .cluster .split { gap: 4px; padding-right: 4px; }
  .split .face { display: flex; align-items: center; width: 23px; height: 24px; padding-left: 4px; background: #5a8fc8; }

  .watermark { position: absolute; right: 53px; bottom: 20px; opacity: .72; color: #fff; pointer-events: none; font-family: "Liberation Sans", "Noto Sans CJK SC", sans-serif; }
  .brand { display: flex; align-items: flex-end; height: 58px; font-size: 40px; line-height: 36px; font-weight: bold; }
  .brand .exp { margin-left: 3px; font-size: 30px; font-weight: bold; }
  .site { font-size: 21px; line-height: 26px; }
</style>
